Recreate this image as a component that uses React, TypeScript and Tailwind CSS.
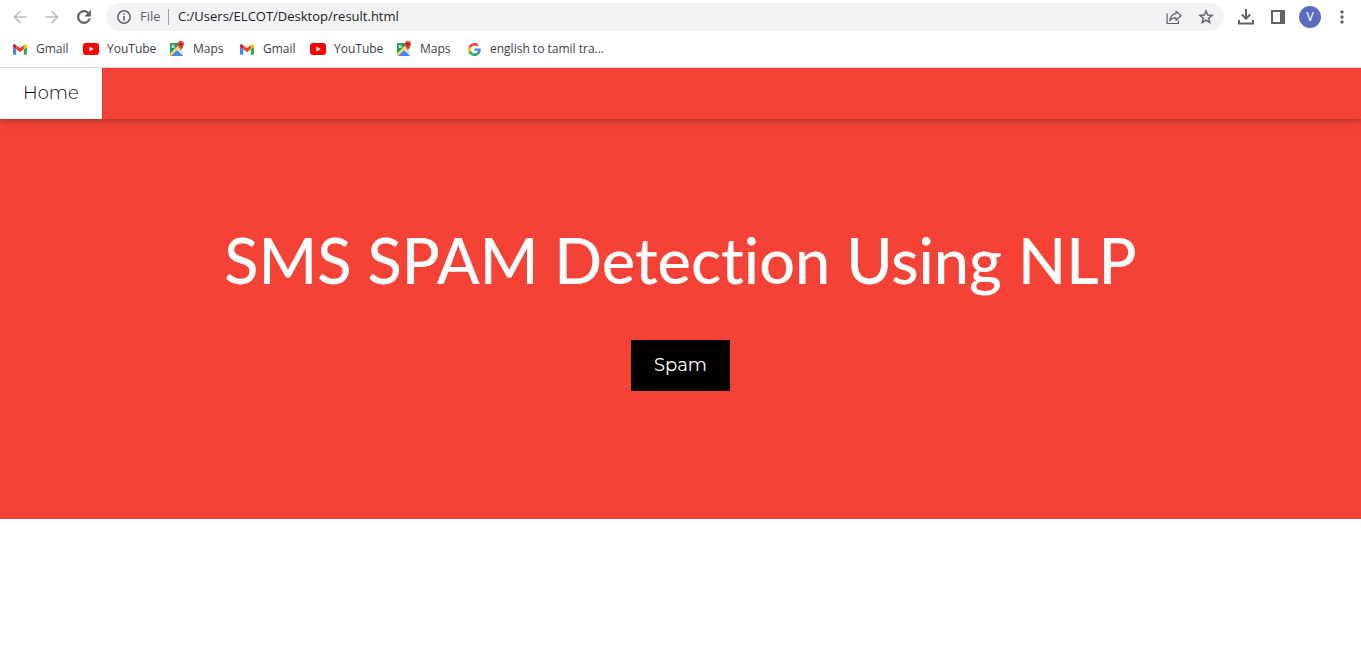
import type { ReactNode } from "react";
import { MdArrowBack, MdArrowForward, MdMoreVert } from "react-icons/md";

function GmailIcon() {
  return (
    <svg viewBox="52 42 88 66" className="h-[11px] w-3.5" aria-hidden="true">
      <path fill="#4285f4" d="M58 108h14V74L52 59v43c0 3.32 2.69 6 6 6" />
      <path fill="#34a853" d="M120 108h14c3.32 0 6-2.69 6-6V59l-20 15" />
      <path fill="#fbbc04" d="M120 48v26l20-15v-8c0-7.42-8.47-11.65-14.4-7.2" />
      <path fill="#ea4335" d="M72 74V48l24 18 24-18v26L96 92" />
      <path fill="#c5221f" d="M52 51v8l20 15V48l-5.600-4.200c-5.940-4.450-14.400-.22-14.400 7.200" />
    </svg>
  );
}

function YouTubeIcon() {
  return (
    <svg viewBox="0 0 16 12" className="h-3 w-4" aria-hidden="true">
      <rect width="16" height="12" rx="3" fill="#f00" />
      <path d="M6.400 3.500v5L10.600 6z" fill="#fff" />
    </svg>
  );
}

function MapsIcon() {
  return (
    <svg viewBox="0 0 16 16" className="size-4" aria-hidden="true">
      <rect x="1" y="2" width="13" height="13" rx="1" fill="#1a9b58" />
      <path d="M1 12.500 11 2.500l2.500 2.500L3 15H1z" fill="#fdd663" />
      <path d="M2 15 8 9.200l5.800 5.800z" fill="#4285f4" />
      <path d="M8 9.200 12 5.500l2 2v7.300z" fill="#dfe2e6" />
      <path d="M5.900 4.800H4.500v.8h.7a.9.9 0 1 1-.2-1l.5-.5a1.700 1.700 0 1 0 .5 1.200z" fill="#fff" />
      <path d="M11.800 0a3.200 3.200 0 0 0-3.200 3.200c0 2.300 2.500 3.200 3.200 6.800.7-3.600 3.200-4.500 3.200-6.800A3.200 3.200 0 0 0 11.800 0" fill="#ea4335" />
      <circle cx="11.800" cy="3.200" r="1.200" fill="#8c1d18" />
    </svg>
  );
}

function GoogleIcon() {
  return (
    <svg viewBox="0 0 48 48" className="size-[13px]" aria-hidden="true">
      <path fill="#EA4335" d="M24 9.500c3.540 0 6.710 1.220 9.210 3.600l6.850-6.850C35.900 2.380 30.470 0 24 0 14.620 0 6.510 5.380 2.560 13.220l7.980 6.190C12.430 13.720 17.740 9.500 24 9.500z" />
      <path fill="#4285F4" d="M46.980 24.550c0-1.570-.15-3.090-.38-4.550H24v9.020h12.940c-.58 2.960-2.260 5.480-4.780 7.180l7.730 6c4.510-4.180 7.090-10.360 7.090-17.650z" />
      <path fill="#FBBC05" d="M10.530 28.590c-.48-1.450-.76-2.990-.76-4.590s.27-3.140.76-4.590l-7.980-6.190C.92 16.460 0 20.120 0 24c0 3.880.92 7.540 2.560 10.780l7.970-6.190z" />
      <path fill="#34A853" d="M24 48c6.480 0 11.930-2.130 15.890-5.810l-7.730-6c-2.150 1.450-4.920 2.300-8.160 2.300-6.260 0-11.570-4.220-13.470-9.910l-7.980 6.190C6.510 42.620 14.620 48 24 48z" />
    </svg>
  );
}

function ReloadIcon() {
  return (
    <svg viewBox="0 0 24 24" className="size-5" fill="currentColor" stroke="currentColor" strokeWidth="0.7" aria-hidden="true">
      <path d="M17.650 6.350A7.958 7.958 0 0 0 12 4c-4.420 0-7.990 3.580-7.990 8s3.570 8 7.990 8c3.730 0 6.840-2.550 7.730-6h-2.080A5.990 5.990 0 0 1 12 18c-3.310 0-6-2.690-6-6s2.690-6 6-6c1.660 0 3.140.69 4.220 1.780L13 11h7V4z" />
    </svg>
  );
}

function InfoIcon() {
  return (
    <svg viewBox="0 0 14 14" className="size-3.5 shrink-0" aria-hidden="true">
      <circle cx="7" cy="7" r="6.200" fill="none" stroke="#5f6368" strokeWidth="1.500" />
      <path d="M6.200 3.200h1.600v1.600H6.200zM6.200 6h1.600v4.800H6.200z" fill="#5f6368" />
    </svg>
  );
}

function StarIcon() {
  return (
    <svg viewBox="0 0 24 24" className="size-[18px]" fill="#5f6368" stroke="#5f6368" strokeWidth="0.4" aria-hidden="true">
      <path d="m22 9.240-7.190-.62L12 2 9.190 8.630 2 9.240l5.460 4.730L5.820 21 12 17.270 18.180 21l-1.630-7.030zM12 15.400l-3.760 2.270 1-4.280-3.320-2.880 4.380-.38L12 6.100l1.710 4.040 4.380.38-3.320 2.880 1 4.280z" />
    </svg>
  );
}

function ShareIcon() {
  return (
    <svg viewBox="0 0 16 16" className="size-4" fill="none" stroke="#5f6368" strokeWidth="1.200" aria-hidden="true">
      <path d="M1.100 4.500v10h11.300v-3" />
      <path d="M10 2.200 15 6.800l-5 4.500V8.800c-3 0-5 .9-6.300 3 .5-4 2.500-6.600 6.300-7.200z" strokeLinejoin="round" />
    </svg>
  );
}

function DownloadIcon() {
  return (
    <svg viewBox="0 0 16 16" className="size-4" fill="none" stroke="#5f6368" strokeWidth="2" aria-hidden="true">
      <path d="M8 0v9M3.800 5.500 8 9.700l4.200-4.200M1 11v3.500h14V11" />
    </svg>
  );
}

function SidePanelIcon() {
  return (
    <svg viewBox="0 0 14 14" className="size-3.5" aria-hidden="true">
      <path d="M0 0h14v14H0zM2 2v10h7V2z" fill="#5f6368" fillRule="evenodd" />
    </svg>
  );
}

function ToolButton({ label, children }: { label: string; children: ReactNode }) {
  return (
    <button type="button" aria-label={label} className="flex size-8 shrink-0 items-center justify-center text-[#5f6368]">
      {children}
    </button>
  );
}

const bookmarks = [
  { label: "Gmail", icon: <GmailIcon />, width: "w-[71px]" },
  { label: "YouTube", icon: <YouTubeIcon />, width: "w-[86px]" },
  { label: "Maps", icon: <MapsIcon />, width: "w-[70px]" },
  { label: "Gmail", icon: <GmailIcon />, width: "w-[71px]" },
  { label: "YouTube", icon: <YouTubeIcon />, width: "w-[86px]" },
  { label: "Maps", icon: <MapsIcon />, width: "w-[70px]" },
  { label: "english to tamil tra...", icon: <GoogleIcon />, width: "w-36" },
];

export default function App() {
  return (
    <div className="min-h-screen bg-white">
      <header className="border-b border-[#dadce0] font-['Open_Sans','Noto_Sans',sans-serif]">
        <div className="flex h-[34px] items-center pr-[3px] pl-1">
          <div className="flex text-[#bcbec1]">
            <button type="button" aria-label="Back" disabled className="flex size-8 items-center justify-center">
              <MdArrowBack size={20} />
            </button>
            <button type="button" aria-label="Forward" disabled className="flex size-8 items-center justify-center">
              <MdArrowForward size={20} />
            </button>
            <ToolButton label="Reload">
              <ReloadIcon />
            </ToolButton>
          </div>
          <div className="ml-1.5 flex h-7 grow items-center rounded-full bg-[#f1f3f4] pr-0.5 pl-[11px] text-[13px] text-[#202124]">
            <InfoIcon />
            <span className="ml-[9px] w-7 text-[#5f6368]">File</span>
            <span className="h-4 w-px bg-[#9aa0a6]" />
            <input
              aria-label="Address"
              defaultValue="C:/Users/ELCOT/Desktop/result.html"
              className="ml-[9px] min-w-0 grow bg-transparent outline-none"
            />
            <ToolButton label="Share">
              <ShareIcon />
            </ToolButton>
            <ToolButton label="Bookmark this page">
              <StarIcon />
            </ToolButton>
          </div>
          <div className="ml-1.5 flex">
            <ToolButton label="Downloads">
              <DownloadIcon />
            </ToolButton>
            <ToolButton label="Side panel">
              <SidePanelIcon />
            </ToolButton>
            <ToolButton label="Profile">
              <span className="flex size-[22px] items-center justify-center rounded-full bg-[#5c6bc0] font-[Roboto,sans-serif] text-xs text-white">
                V
              </span>
            </ToolButton>
            <ToolButton label="Menu">
              <MdMoreVert size={20} />
            </ToolButton>
          </div>
        </div>
        <nav aria-label="Bookmarks" className="flex h-[33px] items-center pb-[3px] pl-3 text-xs text-[#3c4043]">
          {bookmarks.map((b, i) => (
            <a key={i} href="#" className={"flex shrink-0 items-center gap-2 whitespace-nowrap " + b.width}>
              <span className="flex w-4 shrink-0 justify-center">{b.icon}</span>
              {b.label}
            </a>
          ))}
        </nav>
      </header>

      <nav className="relative flex bg-[#f44336] font-[Montserrat,Inter,sans-serif] text-lg">
        <div className="flex grow shadow-[0_2px_5px_0_rgba(0,0,0,0.16),0_2px_10px_0_rgba(0,0,0,0.12)] [clip-path:inset(0_0_-12px_0)]">
          <a href="#" className="bg-white px-[23px] py-3 leading-[27px] font-light text-black">
            Home
          </a>
        </div>
      </nav>

      <main className="flex flex-col items-center bg-[#f44336] px-4 pt-24 pb-32 text-center text-white">
        <h1 className="font-[Lato,sans-serif] text-[63px] leading-[90px] font-medium [font-variant-ligatures:none]">
          SMS SPAM Detection Using NLP
        </h1>
        <button type="button" className="mt-[35px] bg-black px-[23px] py-3 font-[Montserrat,Inter,sans-serif] text-lg leading-[27px]">
          Spam
        </button>
      </main>
    </div>
  );
}
